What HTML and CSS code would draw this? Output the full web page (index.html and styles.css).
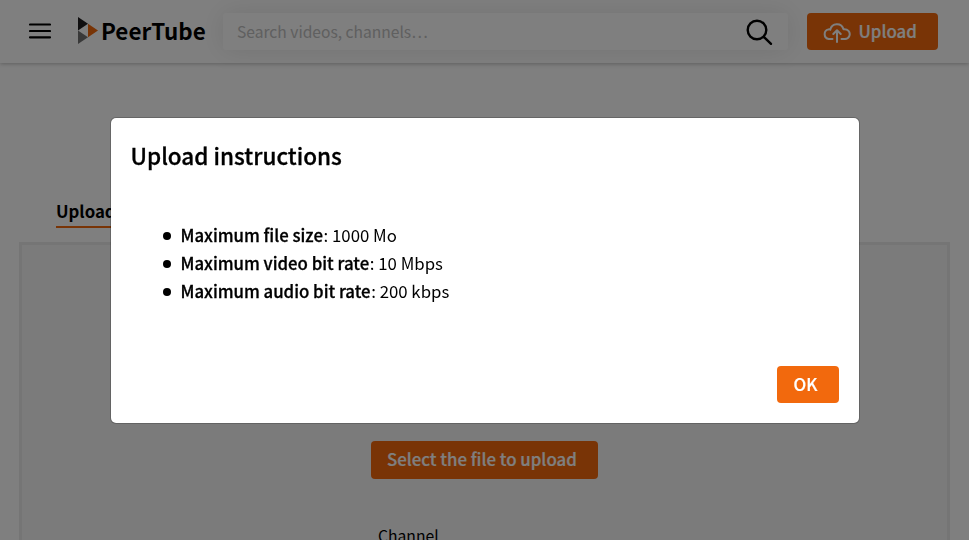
FILE: index.html
```html
<!DOCTYPE html>
<html lang="en">
<head>
<meta charset="utf-8">
<title>PeerTube</title>
<link rel="stylesheet" href="styles.css">
</head>
<body>
<header class="header">
  <button class="menu" aria-label="Menu">
    <svg width="22" height="16" viewBox="0 0 22 16" fill="none" stroke="#000" stroke-width="2.2" stroke-linecap="round"><path d="M1 1.500h20M1 8h20M1 14.300h20"/></svg>
  </button>
  <a class="brand">
    <svg width="20" height="27" viewBox="0 0 20 27"><path fill="#211f20" d="M0 0v13.500L10 6.800z"/><path fill="#737373" d="M0 13.500V27l10-6.800z"/><path fill="#f1680d" d="M10 6.800v13.400l10-6.700z"/></svg>
    <span class="name">PeerTube</span>
  </a>
  <div class="search">
    <span class="placeholder">Search videos, channels…</span>
    <svg width="27" height="27" viewBox="0 0 27 27" fill="none" stroke="#000" stroke-width="2.400" stroke-linecap="round"><circle cx="11" cy="11" r="9.300"/><path d="M17.800 17.800l7.200 7"/></svg>
  </div>
  <a class="button upload">
    <svg width="28" height="22" viewBox="0 0 28 22" fill="none" stroke="#fff" stroke-width="2" stroke-linecap="round" stroke-linejoin="round"><path d="M9.500 18H5.800a4.900 4.900 0 0 1-.4-9.600q1.300-.2 1.900.2A6.800 6.800 0 0 1 20.500 8.200q3.200-.3 5 1.700A4.900 4.900 0 0 1 22 18h-3.500M14 21V9.500M10.300 13L14 9.300l3.700 3.700"/></svg>
    <span>Upload</span>
  </a>
</header>
<main class="page">
  <nav class="tabs"><a class="tab">Upload a file</a></nav>
  <section class="drop">
    <a class="button select"><span>Select the file to upload</span></a>
    <label class="channel">Channel</label>
  </section>
</main>
<div class="backdrop">
  <div class="modal" role="dialog">
    <h4 class="title">Upload instructions</h4>
    <ul class="limits">
      <li><b>Maximum file size</b>: 1000 Mo</li>
      <li><b>Maximum video bit rate</b>: 10 Mbps</li>
      <li><b>Maximum audio bit rate</b>: 200 kbps</li>
    </ul>
    <div class="footer"><button class="button ok"><span>OK</span></button></div>
  </div>
</div>
</body>
</html>
```
FILE: styles.css
```css
* { box-sizing: border-box; }
body {
  margin: 0;
  height: 540px;
  overflow: hidden;
  background: #fff;
  color: #000;
  font: 15.7px/28px "Noto Sans CJK SC", "Noto Sans", sans-serif;
}
svg { display: block; flex: none; }
button { border: 0; padding: 0; background: none; font: inherit; }
.header {
  display: flex;
  align-items: center;
  height: 63px;
  padding: 0 31px 0 29px;
  box-shadow: 0 1px 4px rgba(0, 0, 0, .25);
}
.menu { margin: -2px 27px 0 0; }
.brand { display: flex; align-items: center; width: 145px; height: 37px; }
.brand svg { margin-top: -3px; }
.name { margin: -4px 0 0 3px; font-size: 22.4px; font-weight: 700; white-space: nowrap; }
.search {
  display: flex;
  align-items: center;
  justify-content: space-between;
  flex: 1;
  height: 37px;
  margin-right: 19px;
  padding: 0 15px 0 14px;
  border-radius: 3px;
  background: #fff;
  box-shadow: 0 0 27px rgba(0, 0, 0, .1);
}
.search svg { margin-top: 1px; }
.placeholder { margin-top: -2px; color: #c0c0c0; font-size: 15.6px; white-space: nowrap; }
.button {
  display: flex;
  align-items: center;
  height: 37px;
  padding: 0 16px 2px;
  border-radius: 4px;
  background: #f2690d;
  color: #fff;
  font-size: 16.85px;
  font-weight: 500;
  -webkit-text-stroke: .2px;
  white-space: nowrap;
}
.upload { width: 131px; }
.upload svg { margin-top: 2px; }
.upload span { margin-left: 7.5px; }
.page { padding: 135px 19px 0; }
.tabs { display: flex; padding-left: 37px; height: 44px; }
.tab { height: 30px; border-bottom: 2px solid #f2690d; font-size: 16.8px; line-height: 26px; font-weight: 700; }
.drop {
  display: flex;
  flex-direction: column;
  height: 299px;
  padding: 196px 0 0 349px;
  border: 3px solid #eaeaea;
  border-bottom: 0;
  background: #f7f7f7;
}
.select { width: 227px; height: 38px; flex: none; }
.channel { margin: 43px 0 0 7px; }
.backdrop {
  position: fixed;
  inset: 0;
  display: flex;
  justify-content: center;
  padding-top: 117px;
  background: rgba(0, 0, 0, .5);
}
.modal {
  display: flex;
  flex-direction: column;
  width: 750px;
  height: 307px;
  padding: 20px;
  border: 1px solid rgba(0, 0, 0, .2);
  border-radius: 6px;
  background: #fff;
  background-clip: padding-box;
}
.title {
  margin: 0;
  font-size: 22.5px;
  line-height: 34px;
  font-weight: 500;
  -webkit-text-stroke: .3px;
}
.limits { margin: 49px 0 0; padding: 0 0 0 32px; list-style: none; font-size: 16.8px; }
.limits li { display: flex; align-items: center; white-space: pre; }
.limits li::before {
  content: "";
  width: 8px;
  height: 8px;
  margin: 1px 10px 0 0;
  border-radius: 50%;
  background: #000;
}
.limits b { padding-right: .7px; font-weight: 500; -webkit-text-stroke: .3px; }
.footer { display: flex; justify-content: flex-end; margin-top: auto; }
.ok { width: 62px; padding-left: 17px; }
```
